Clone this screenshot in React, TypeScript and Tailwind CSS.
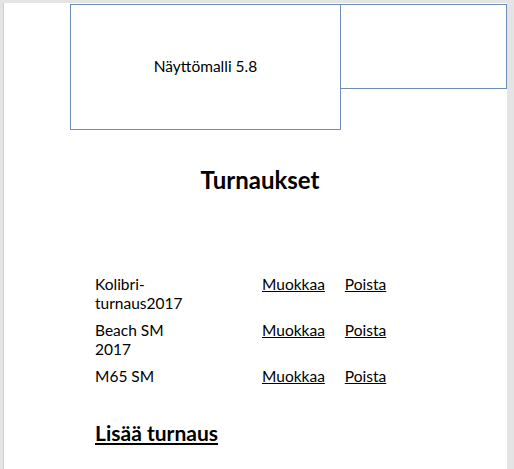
import React from "react";

const rows = [
  { name: "Kolibri-\u200Bturnaus2017" },
  { name: "Beach SM 2017" },
  { name: "M65 SM" },
];

export default function App() {
  return (
    <div
      className="w-[514px] h-[469px] bg-[#e4e4e4] pt-[3px] pl-[3px] pr-[7px] overflow-hidden"
      style={{ fontFamily: "Lato, 'Open Sans', sans-serif" }}
    >
      <div className="h-full bg-white border-l border-[#d0d0d0] text-black">
        <div className="flex pt-px pl-[66px]">
          <div className="w-[271px] h-[126px] border border-[#6d8fb6] flex items-center justify-center text-[15.5px]">
            Näyttömalli 5.8
          </div>
          <div className="w-[167px] h-[85px] -ml-px border border-[#6d8fb6]" />
        </div>
        <div className="mt-[35px] flex justify-center pl-[9px]">
          <h1 className="text-[24px] font-bold leading-[30px]">Turnaukset</h1>
        </div>
        <div className="mt-[80px] pl-[91px] flex flex-col gap-[8px] text-[15.5px] leading-[19px]">
          {rows.map((r) => (
            <div key={r.name} className="flex">
              <div className="w-[100px] break-words">{r.name}</div>
              <a href="#" className="ml-[67px] underline">Muokkaa</a>
              <a href="#" className="ml-[20px] underline">Poista</a>
            </div>
          ))}
        </div>
        <div className="mt-[34px] pl-[91px]">
          <a href="#" className="text-[21px] font-bold underline leading-[26px]">Lisää turnaus</a>
        </div>
      </div>
    </div>
  );
}
